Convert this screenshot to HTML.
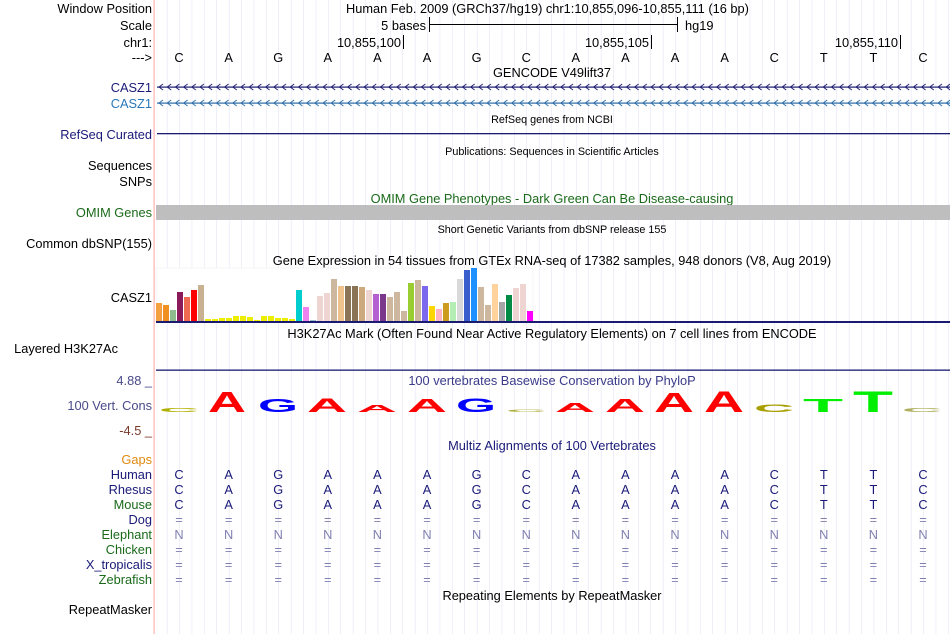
<!DOCTYPE html>
<html><head><meta charset="utf-8"><style>
html,body{margin:0;padding:0;background:#fff;}
svg{display:block;font-family:"Liberation Sans",Arial,sans-serif;}
</style></head><body>
<svg width="950" height="634" viewBox="0 0 950 634" xmlns="http://www.w3.org/2000/svg">
<defs>
<pattern id="grid" x="155" y="0" width="12.4" height="634" patternUnits="userSpaceOnUse"><rect x="12" y="0" width="1" height="634" fill="#d8d8f4"/></pattern>
<pattern id="chev1" x="158" y="80" width="8.2" height="14" patternUnits="userSpaceOnUse"><path d="M5 4 L1 7 L5 10" fill="none" stroke="#1a1a70" stroke-width="0.9"/></pattern>
<pattern id="chev2" x="158" y="96" width="8.2" height="14" patternUnits="userSpaceOnUse"><path d="M5 4 L1 7 L5 10" fill="none" stroke="#2a6aa8" stroke-width="0.9"/></pattern>
</defs>
<rect x="0" y="0" width="950" height="634" fill="#fff"/>
<rect x="155" y="0" width="795" height="634" fill="url(#grid)"/>
<rect x="153.5" y="0" width="1.2" height="634" fill="#ffb0b0"/>

<g font-size="12.8" text-anchor="end" fill="#000">
<text x="152" y="13">Window Position</text>
<text x="152" y="30">Scale</text>
<text x="152" y="47">chr1:</text>
<text x="152" y="62">---&gt;</text>
<text x="152" y="92" fill="#1a1a78">CASZ1</text>
<text x="152" y="108" fill="#2a78b8">CASZ1</text>
<text x="152" y="139" fill="#1a1a78">RefSeq Curated</text>
<text x="152" y="170">Sequences</text>
<text x="152" y="186">SNPs</text>
<text x="152" y="217" fill="#1a6a1a">OMIM Genes</text>
<text x="152" y="248">Common dbSNP(155)</text>
<text x="152" y="302">CASZ1</text>
<text x="118" y="353">Layered H3K27Ac</text>
<text x="152" y="385" fill="#4a4a8a">4.88 _</text>
<text x="152" y="410" fill="#4a4a8a">100 Vert. Cons</text>
<text x="152" y="435" fill="#7a3a2a">-4.5 _</text>
<text x="152" y="464" fill="#e08a10">Gaps</text>
<text x="152" y="479" fill="#1a1a78">Human</text>
<text x="152" y="494" fill="#1a1a78">Rhesus</text>
<text x="152" y="509" fill="#1a6a1a">Mouse</text>
<text x="152" y="524" fill="#1a1a78">Dog</text>
<text x="152" y="539" fill="#1a6a1a">Elephant</text>
<text x="152" y="554" fill="#1a6a1a">Chicken</text>
<text x="152" y="569" fill="#1a1a78">X_tropicalis</text>
<text x="152" y="584" fill="#1a6a1a">Zebrafish</text>
<text x="152" y="614">RepeatMasker</text>
</g>

<g font-size="12.8" fill="#000">
<text x="346" y="13">Human Feb. 2009 (GRCh37/hg19)   chr1:10,855,096-10,855,111 (16 bp)</text>
<text x="426" y="30" text-anchor="end">5 bases</text>
<rect x="429" y="17" width="1" height="15"/><rect x="677" y="17" width="1" height="15"/><rect x="429" y="24" width="249" height="1"/>
<text x="685" y="30">hg19</text>
<text x="401" y="47" text-anchor="end">10,855,100</text><rect x="403" y="35" width="1" height="14"/>
<text x="649" y="47" text-anchor="end">10,855,105</text><rect x="651" y="35" width="1" height="14"/>
<text x="898" y="47" text-anchor="end">10,855,110</text><rect x="900" y="35" width="1" height="14"/>
</g>
<g font-size="12.8" fill="#000" text-anchor="middle">
<text x="179" y="62">C</text><text x="228.6" y="62">A</text><text x="278.2" y="62">G</text><text x="327.8" y="62">A</text><text x="377.4" y="62">A</text><text x="427" y="62">A</text><text x="476.6" y="62">G</text><text x="526.2" y="62">C</text><text x="575.8" y="62">A</text><text x="625.4" y="62">A</text><text x="675" y="62">A</text><text x="724.6" y="62">A</text><text x="774.2" y="62">C</text><text x="823.8" y="62">T</text><text x="873.4" y="62">T</text><text x="923" y="62">C</text>
</g>
<text x="552" y="77" font-size="12.8" text-anchor="middle">GENCODE V49lift37</text>
<rect x="157" y="86.5" width="793" height="1.2" fill="#1a1a70"/>
<rect x="157" y="80" width="793" height="14" fill="url(#chev1)"/>
<rect x="157" y="102.5" width="793" height="1.2" fill="#2a6aa8"/>
<rect x="157" y="96" width="793" height="14" fill="url(#chev2)"/>
<text x="552" y="123" font-size="10.8" text-anchor="middle">RefSeq genes from NCBI</text>
<rect x="157" y="133" width="793" height="1.3" fill="#1a1a70"/>
<text x="552" y="155" font-size="10.8" text-anchor="middle">Publications: Sequences in Scientific Articles</text>
<text x="552" y="203" font-size="12.8" text-anchor="middle" fill="#1a6a1a">OMIM Gene Phenotypes - Dark Green Can Be Disease-causing</text>
<rect x="156" y="205" width="794" height="15" fill="#bebebe"/>
<text x="552" y="233" font-size="10.8" text-anchor="middle">Short Genetic Variants from dbSNP release 155</text>
<text x="552" y="265" font-size="12.8" text-anchor="middle">Gene Expression in 54 tissues from GTEx RNA-seq of 17382 samples, 948 donors (V8, Aug 2019)</text>
<rect x="156" y="268" width="377" height="53" fill="#fff" stroke="#eee" stroke-width="0.5"/>
<g>
<rect x="156" y="303" width="6" height="18" fill="#f4a040"/>
<rect x="163" y="305" width="6" height="16" fill="#f09020"/>
<rect x="170" y="310" width="6" height="11" fill="#8fbc8f"/>
<rect x="177" y="292" width="6" height="29" fill="#8b1a5a"/>
<rect x="184" y="297" width="6" height="24" fill="#ee6a50"/>
<rect x="191" y="290" width="6" height="31" fill="#ff0000"/>
<rect x="198" y="285" width="6" height="36" fill="#c8b090"/>
<rect x="205" y="319" width="6" height="2" fill="#eeee00"/>
<rect x="212" y="319" width="6" height="2" fill="#eeee00"/>
<rect x="219" y="318" width="6" height="3" fill="#eeee00"/>
<rect x="226" y="318" width="6" height="3" fill="#eeee00"/>
<rect x="233" y="316" width="6" height="5" fill="#eeee00"/>
<rect x="240" y="316" width="6" height="5" fill="#eeee00"/>
<rect x="247" y="317" width="6" height="4" fill="#eeee00"/>
<rect x="254" y="320" width="6" height="1" fill="#eeee00"/>
<rect x="261" y="316" width="6" height="5" fill="#eeee00"/>
<rect x="268" y="316" width="6" height="5" fill="#eeee00"/>
<rect x="275" y="318" width="6" height="3" fill="#eeee00"/>
<rect x="282" y="318" width="6" height="3" fill="#eeee00"/>
<rect x="289" y="319" width="6" height="2" fill="#eeee00"/>
<rect x="296" y="290" width="6" height="31" fill="#00cdcd"/>
<rect x="303" y="307" width="6" height="14" fill="#ee82ee"/>
<rect x="310" y="320" width="6" height="1" fill="#9ac0cd"/>
<rect x="317" y="296" width="6" height="25" fill="#eed5d2"/>
<rect x="324" y="293" width="6" height="28" fill="#eed5d2"/>
<rect x="331" y="279" width="6" height="42" fill="#cdb79e"/>
<rect x="338" y="286" width="6" height="35" fill="#eec28a"/>
<rect x="345" y="286" width="6" height="35" fill="#8b7355"/>
<rect x="352" y="286" width="6" height="35" fill="#8b7355"/>
<rect x="359" y="287" width="6" height="34" fill="#cdaa7d"/>
<rect x="366" y="290" width="6" height="31" fill="#eed5d2"/>
<rect x="373" y="294" width="6" height="27" fill="#b460d0"/>
<rect x="380" y="294" width="6" height="27" fill="#7a378b"/>
<rect x="387" y="297" width="6" height="24" fill="#cdb79e"/>
<rect x="394" y="292" width="6" height="29" fill="#cdb79e"/>
<rect x="401" y="311" width="6" height="10" fill="#cdb79e"/>
<rect x="408" y="283" width="6" height="38" fill="#9acd32"/>
<rect x="415" y="280" width="6" height="41" fill="#cdb79e"/>
<rect x="422" y="286" width="6" height="35" fill="#7b68ee"/>
<rect x="429" y="306" width="6" height="15" fill="#ffd700"/>
<rect x="436" y="309" width="6" height="12" fill="#ffb6c1"/>
<rect x="443" y="303" width="6" height="18" fill="#cd9b1d"/>
<rect x="450" y="302" width="6" height="19" fill="#b4eeb4"/>
<rect x="457" y="279" width="6" height="42" fill="#d9d9d9"/>
<rect x="464" y="270" width="6" height="51" fill="#3a5fcd"/>
<rect x="471" y="268" width="6" height="53" fill="#1e90ff"/>
<rect x="478" y="287" width="6" height="34" fill="#cdb79e"/>
<rect x="485" y="305" width="6" height="16" fill="#cdb79e"/>
<rect x="492" y="284" width="6" height="37" fill="#ffd39b"/>
<rect x="499" y="302" width="6" height="19" fill="#a6a6a6"/>
<rect x="506" y="295" width="6" height="26" fill="#008b45"/>
<rect x="513" y="288" width="6" height="33" fill="#eed5d2"/>
<rect x="520" y="284" width="6" height="37" fill="#eed5d2"/>
<rect x="527" y="311" width="6" height="10" fill="#ff00ff"/>
</g>
<rect x="156" y="321" width="794" height="2" fill="#1a1a70"/>
<text x="552" y="338" font-size="12.8" text-anchor="middle">H3K27Ac Mark (Often Found Near Active Regulatory Elements) on 7 cell lines from ENCODE</text>
<rect x="156" y="369.5" width="794" height="1.3" fill="#1a1a70"/>
<text x="552" y="385" font-size="12.8" text-anchor="middle" fill="#3a3a8a">100 vertebrates Basewise Conservation by PhyloP</text>

<g font-weight="bold">
<text x="159" y="412" font-size="5" textLength="40" lengthAdjust="spacingAndGlyphs" fill="#b0b000">C</text>
<text x="208" y="412" font-size="29" textLength="38" lengthAdjust="spacingAndGlyphs" fill="#ff0000">A</text>
<text x="258" y="412" font-size="18" textLength="40" lengthAdjust="spacingAndGlyphs" fill="#0000ff">G</text>
<text x="307" y="412" font-size="19" textLength="40" lengthAdjust="spacingAndGlyphs" fill="#ff0000">A</text>
<text x="357" y="412" font-size="10" textLength="40" lengthAdjust="spacingAndGlyphs" fill="#ff0000">A</text>
<text x="407" y="412" font-size="18" textLength="40" lengthAdjust="spacingAndGlyphs" fill="#ff0000">A</text>
<text x="456" y="412" font-size="19" textLength="40" lengthAdjust="spacingAndGlyphs" fill="#0000ff">G</text>
<text x="506" y="412" font-size="4" textLength="40" lengthAdjust="spacingAndGlyphs" fill="#b0b040">C</text>
<text x="555" y="412" font-size="13" textLength="40" lengthAdjust="spacingAndGlyphs" fill="#ff0000">A</text>
<text x="605" y="412" font-size="18" textLength="40" lengthAdjust="spacingAndGlyphs" fill="#ff0000">A</text>
<text x="654" y="412" font-size="28" textLength="40" lengthAdjust="spacingAndGlyphs" fill="#ff0000">A</text>
<text x="704" y="412" font-size="30" textLength="40" lengthAdjust="spacingAndGlyphs" fill="#ff0000">A</text>
<text x="754" y="412" font-size="11" textLength="40" lengthAdjust="spacingAndGlyphs" fill="#a8a000">C</text>
<text x="803" y="412" font-size="18" textLength="40" lengthAdjust="spacingAndGlyphs" fill="#00ee00">T</text>
<text x="853" y="412" font-size="30" textLength="40" lengthAdjust="spacingAndGlyphs" fill="#00ee00">T</text>
<text x="902" y="412" font-size="5" textLength="40" lengthAdjust="spacingAndGlyphs" fill="#b0b060">C</text>
</g>

<text x="552" y="450" font-size="12.8" text-anchor="middle" fill="#1a1a78">Multiz Alignments of 100 Vertebrates</text>
<g font-size="12.8" text-anchor="middle" fill="#1a1a78">
<text y="479"><tspan x="179">C</tspan><tspan x="228.6">A</tspan><tspan x="278.2">G</tspan><tspan x="327.8">A</tspan><tspan x="377.4">A</tspan><tspan x="427">A</tspan><tspan x="476.6">G</tspan><tspan x="526.2">C</tspan><tspan x="575.8">A</tspan><tspan x="625.4">A</tspan><tspan x="675">A</tspan><tspan x="724.6">A</tspan><tspan x="774.2">C</tspan><tspan x="823.8">T</tspan><tspan x="873.4">T</tspan><tspan x="923">C</tspan></text>
<text y="494"><tspan x="179">C</tspan><tspan x="228.6">A</tspan><tspan x="278.2">G</tspan><tspan x="327.8">A</tspan><tspan x="377.4">A</tspan><tspan x="427">A</tspan><tspan x="476.6">G</tspan><tspan x="526.2">C</tspan><tspan x="575.8">A</tspan><tspan x="625.4">A</tspan><tspan x="675">A</tspan><tspan x="724.6">A</tspan><tspan x="774.2">C</tspan><tspan x="823.8">T</tspan><tspan x="873.4">T</tspan><tspan x="923">C</tspan></text>
<text y="509"><tspan x="179">C</tspan><tspan x="228.6">A</tspan><tspan x="278.2">G</tspan><tspan x="327.8">A</tspan><tspan x="377.4">A</tspan><tspan x="427">A</tspan><tspan x="476.6">G</tspan><tspan x="526.2">C</tspan><tspan x="575.8">A</tspan><tspan x="625.4">A</tspan><tspan x="675">A</tspan><tspan x="724.6">A</tspan><tspan x="774.2">C</tspan><tspan x="823.8">T</tspan><tspan x="873.4">T</tspan><tspan x="923">C</tspan></text>
</g>
<g font-size="12.8" text-anchor="middle" fill="#8080b0">
<text y="524"><tspan x="179">=</tspan><tspan x="228.6">=</tspan><tspan x="278.2">=</tspan><tspan x="327.8">=</tspan><tspan x="377.4">=</tspan><tspan x="427">=</tspan><tspan x="476.6">=</tspan><tspan x="526.2">=</tspan><tspan x="575.8">=</tspan><tspan x="625.4">=</tspan><tspan x="675">=</tspan><tspan x="724.6">=</tspan><tspan x="774.2">=</tspan><tspan x="823.8">=</tspan><tspan x="873.4">=</tspan><tspan x="923">=</tspan></text>
<text y="539"><tspan x="179">N</tspan><tspan x="228.6">N</tspan><tspan x="278.2">N</tspan><tspan x="327.8">N</tspan><tspan x="377.4">N</tspan><tspan x="427">N</tspan><tspan x="476.6">N</tspan><tspan x="526.2">N</tspan><tspan x="575.8">N</tspan><tspan x="625.4">N</tspan><tspan x="675">N</tspan><tspan x="724.6">N</tspan><tspan x="774.2">N</tspan><tspan x="823.8">N</tspan><tspan x="873.4">N</tspan><tspan x="923">N</tspan></text>
<text y="554"><tspan x="179">=</tspan><tspan x="228.6">=</tspan><tspan x="278.2">=</tspan><tspan x="327.8">=</tspan><tspan x="377.4">=</tspan><tspan x="427">=</tspan><tspan x="476.6">=</tspan><tspan x="526.2">=</tspan><tspan x="575.8">=</tspan><tspan x="625.4">=</tspan><tspan x="675">=</tspan><tspan x="724.6">=</tspan><tspan x="774.2">=</tspan><tspan x="823.8">=</tspan><tspan x="873.4">=</tspan><tspan x="923">=</tspan></text>
<text y="569"><tspan x="179">=</tspan><tspan x="228.6">=</tspan><tspan x="278.2">=</tspan><tspan x="327.8">=</tspan><tspan x="377.4">=</tspan><tspan x="427">=</tspan><tspan x="476.6">=</tspan><tspan x="526.2">=</tspan><tspan x="575.8">=</tspan><tspan x="625.4">=</tspan><tspan x="675">=</tspan><tspan x="724.6">=</tspan><tspan x="774.2">=</tspan><tspan x="823.8">=</tspan><tspan x="873.4">=</tspan><tspan x="923">=</tspan></text>
<text y="584"><tspan x="179">=</tspan><tspan x="228.6">=</tspan><tspan x="278.2">=</tspan><tspan x="327.8">=</tspan><tspan x="377.4">=</tspan><tspan x="427">=</tspan><tspan x="476.6">=</tspan><tspan x="526.2">=</tspan><tspan x="575.8">=</tspan><tspan x="625.4">=</tspan><tspan x="675">=</tspan><tspan x="724.6">=</tspan><tspan x="774.2">=</tspan><tspan x="823.8">=</tspan><tspan x="873.4">=</tspan><tspan x="923">=</tspan></text>
</g>
<text x="552" y="600" font-size="12.8" text-anchor="middle">Repeating Elements by RepeatMasker</text>
</svg>
</body></html>
